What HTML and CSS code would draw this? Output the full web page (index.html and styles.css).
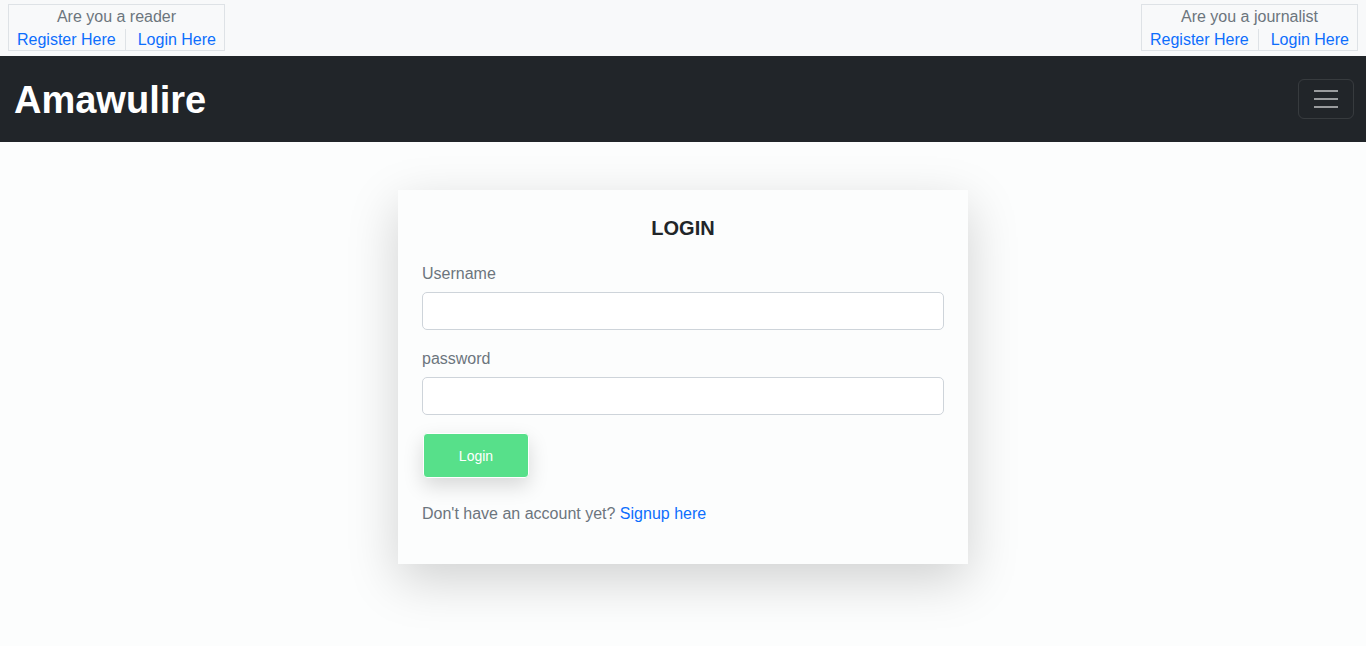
FILE: index.html
```html
<!DOCTYPE html>
<html lang="en">
<head>
<meta charset="utf-8">
<title>Amawulire - Login</title>
<link rel="stylesheet" href="styles.css">
</head>
<body>
<div class="topbar">
  <div class="choice">
    <div class="choice-title">Are you a reader</div>
    <div class="choice-links">
      <a href="#">Register Here</a>
      <a href="#">Login Here</a>
    </div>
  </div>
  <div class="choice">
    <div class="choice-title">Are you a journalist</div>
    <div class="choice-links">
      <a href="#">Register Here</a>
      <a href="#">Login Here</a>
    </div>
  </div>
</div>
<nav class="navbar">
  <a class="brand" href="#">Amawulire</a>
  <button class="toggler" aria-label="Toggle navigation">
    <span class="bar"></span><span class="bar"></span><span class="bar"></span>
  </button>
</nav>
<main class="main">
  <div class="card">
    <h2 class="card-title">LOGIN</h2>
    <form class="form">
      <label class="field">
        <span class="label">Username</span>
        <input type="text" class="input">
      </label>
      <label class="field">
        <span class="label">password</span>
        <input type="password" class="input">
      </label>
      <button type="button" class="btn">Login</button>
    </form>
    <p class="signup">Don't have an account yet? <a href="#">Signup here</a></p>
  </div>
</main>
</body>
</html>
```

FILE: styles.css
```css
* { box-sizing: border-box; }
html, body { margin: 0; padding: 0; }
body {
  font-family: "Liberation Sans", Arial, sans-serif;
  font-size: 16px;
  color: #6c757d;
  background: #fcfdfd;
}
a { color: #0d6efd; text-decoration: none; }

.topbar {
  background: #f8f9fa;
  height: 56px;
  padding: 4px 8px 0 8px;
  display: flex;
  justify-content: space-between;
  align-items: flex-start;
}
.choice {
  border: 1px solid #dee2e6;
  width: 217px;
  height: 47px;
  display: flex;
  flex-direction: column;
  align-items: center;
}
.choice-title {
  line-height: 22px;
  margin-top: 1px;
  font-size: 16px;
  color: #6c757d;
}
.choice-links {
  display: flex;
  width: 100%;
  margin-top: 1px;
  line-height: 22px;
  font-size: 16px;
}
.choice-links a {
  padding: 0 9px 0 8px;
  white-space: nowrap;
}
.choice-links a + a {
  flex: 1;
  text-align: center;
  padding-left: 12px;
  border-left: 1px solid #dee2e6;
}

.navbar {
  background: #212529;
  height: 86px;
  display: flex;
  align-items: center;
  justify-content: space-between;
  padding: 0 12px 0 14px;
}
.brand {
  color: #fff;
  font-weight: bold;
  font-size: 38px;
  margin-top: 2px;
}
.toggler {
  width: 56px;
  height: 40px;
  background: transparent;
  border: 1px solid rgba(255,255,255,0.1);
  border-radius: 6px;
  display: flex;
  flex-direction: column;
  align-items: center;
  justify-content: center;
  gap: 6px;
  padding: 0;
}
.toggler .bar {
  width: 24px;
  height: 2px;
  background: #9a9c9e;
}

.main {
  padding: 48px 0 80px;
  display: flex;
  justify-content: center;
}
.card {
  width: 570px;
  background: #fcfdfd;
  padding: 24px 24px 38px;
  box-shadow: 0 16px 48px rgba(0,0,0,0.175);
}
.card-title {
  margin: 2px 0 23px;
  text-align: center;
  font-size: 20px;
  line-height: 24px;
  color: #212529;
  font-weight: bold;
}
.form { display: flex; flex-direction: column; align-items: flex-start; }
.field { display: flex; flex-direction: column; width: 100%; margin-bottom: 18px; }
.label { line-height: 22px; margin-bottom: 7px; font-size: 16px; }
.input {
  height: 38px;
  width: 100%;
  border: 1px solid #ced4da;
  border-radius: 5px;
  background: #fff;
  font: inherit;
}
.btn {
  width: 106px;
  height: 45px;
  border: 1px solid #fff;
  border-radius: 4px;
  background: #57e08a;
  color: #fff;
  font-family: inherit;
  font-size: 14px;
  box-shadow: 0 8px 20px rgba(0,0,0,0.15);
  margin: 0 0 0 1px;
}
.signup { margin: 24px 0 0; line-height: 24px; }
```
